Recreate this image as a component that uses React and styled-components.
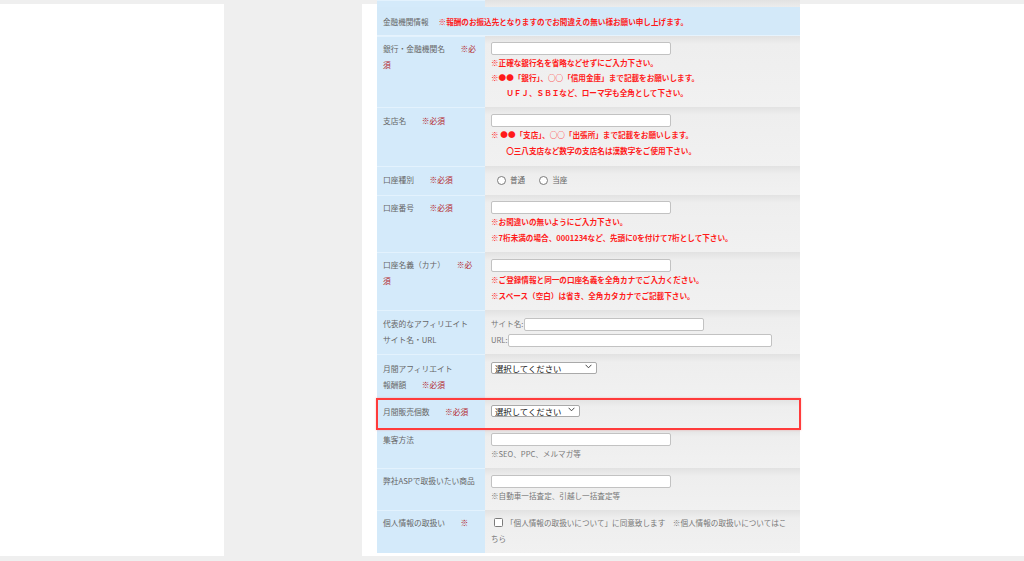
import React from 'react';
import styled, { createGlobalStyle } from 'styled-components';

const GlobalStyle = createGlobalStyle`
  html, body {
    margin: 0;
    padding: 0;
    background: #efefef;
  }
  body {
    font-family: "Noto Sans CJK JP", "Noto Sans", sans-serif;
    font-size: 7.6px;
    color: #666;
  }
`;

const Page = styled.div`
  display: flex;
  align-items: flex-start;
  padding-top: 4px;
  height: 561px;
  box-sizing: border-box;
  overflow: hidden;
`;

const SidePanel = styled.aside`
  width: 224px;
  height: 552px;
  background: #fff;
  flex: none;
`;

const MainPanel = styled.main`
  margin-left: 138px;
  flex: 1;
  height: 552px;
  background: #fff;
  padding-left: 15px;
  box-sizing: border-box;
`;

const FormTable = styled.div`
  width: 423px;
  margin-top: -4px;
  display: flex;
  flex-flow: column nowrap;
`;

const Row = styled.div`
  display: grid;
  grid-template-columns: 108px 315px;
  position: relative;
  ${({ highlight }) => highlight && `
    z-index: 1;
    outline: 2px solid #ff3b3b;
    outline-offset: -1px;
    box-shadow: 0 0 2px 1px rgba(255, 80, 80, 0.35);
  `}
`;

const LabelCell = styled.div`
  background: #d4eafa;
  box-shadow: inset 0 1px 0 #e3f2fd;
  padding: ${({ pad }) => pad || '6px 6px 6px'};
  line-height: 16px;
  font-size: 7.75px;
  color: #666;
`;

const ValueCell = styled.div`
  background: linear-gradient(to bottom, #e2e2e2 0, #eeeeee 8px, #f1f1f1 100%);
  padding: ${({ pad }) => pad || '6px 6px 6px'};
  line-height: 16px;
  color: #666;
`;

const StubRow = styled(Row)`
  height: 7px;
`;

const SectionRow = styled.div`
  height: 29px;
  background: #d3e9f9;
  border-bottom: 1px solid #e6f3fd;
  box-sizing: border-box;
  display: flex;
  align-items: center;
  padding: 0 6px;
  gap: 10px;
`;

const Required = styled.span`
  color: #b3262b;
`;

const RedNote = styled.div`
  color: #ff1a1a;
  font-weight: 700;
  line-height: ${({ lh }) => lh || 16}px;
  white-space: pre;
`;

const RedHeading = styled.span`
  color: #ff1a1a;
  font-weight: 700;
`;

const GrayNote = styled.div`
  color: #777;
  line-height: 16px;
`;

const TextInput = styled.input`
  display: block;
  width: ${({ w }) => w || 180}px;
  height: 13px;
  margin: 0;
  padding: 0 3px;
  box-sizing: border-box;
  border: 1px solid #c2c2c2;
  border-radius: 2px;
  background: #fff;
  font-size: 8px;
`;

const InlineField = styled.label`
  display: flex;
  align-items: center;
  height: 16px;
  color: #777;
`;

const InlineInput = styled(TextInput)`
  display: inline-block;
`;

const SelectWrap = styled.div`
  position: relative;
  width: ${({ w }) => w}px;
  height: 12px;
`;

const NativeSelect = styled.select`
  appearance: none;
  -webkit-appearance: none;
  width: 100%;
  height: 12px;
  margin: 0;
  padding: 0 0 0 3px;
  box-sizing: border-box;
  border: 1px solid #a9a9a9;
  border-radius: 2px;
  background: #fff;
  color: #111;
  font-family: "Noto Sans CJK JP", sans-serif;
  font-size: 8.4px;
  line-height: 10px;
`;

const Chevron = styled.svg`
  position: absolute;
  right: 5px;
  top: 3px;
  width: 7px;
  height: 5px;
  pointer-events: none;
`;

const ChoiceLine = styled.div`
  display: flex;
  align-items: center;
  height: 16px;
  color: #666;
`;

const Radio = styled.span`
  width: 7px;
  height: 7px;
  border: 1px solid #7b7b7b;
  border-radius: 50%;
  background: #fff;
  margin: 0 4px 0 ${({ ml }) => ml || 0}px;
  flex: none;
`;

const Checkbox = styled.span`
  width: 7px;
  height: 7px;
  border: 1px solid #7b7b7b;
  border-radius: 1.5px;
  background: #fff;
  margin: 0 3px 0 3px;
  flex: none;
  display: inline-block;
  vertical-align: -1px;
`;

const AgreeText = styled.div`
  line-height: 16px;
  color: #777;
  padding-right: 2px;
`;

function Select({ w }) {
  return (
    <SelectWrap w={w}>
      <NativeSelect defaultValue="">
        <option value="">選択してください</option>
      </NativeSelect>
      <Chevron viewBox="0 0 7 5">
        <path d="M0.6 0.8 L3.5 3.8 L6.4 0.8" fill="none" stroke="#333" strokeWidth="0.9" />
      </Chevron>
    </SelectWrap>
  );
}

export default function App() {
  return (
    <>
      <GlobalStyle />
      <Page>
        <SidePanel />
        <MainPanel>
          <FormTable>
            <StubRow>
              <LabelCell pad="0" />
              <ValueCell pad="0" />
            </StubRow>

            <SectionRow>
              <span>金融機関情報</span>
              <RedHeading>※報酬のお振込先となりますのでお間違えの無い様お願い申し上げます。</RedHeading>
            </SectionRow>

            <Row>
              <LabelCell pad="5px 6px">
                銀行・金融機関名　　<Required>※必須</Required>
              </LabelCell>
              <ValueCell pad="6px 6px 7px">
                <TextInput />
                <RedNote lh={15}>※正確な銀行名を省略などせずにご入力下さい。</RedNote>
                <RedNote lh={15}>※●●「銀行」、○○「信用金庫」まで記載をお願いします。</RedNote>
                <RedNote lh={15}>　　ＵＦＪ、ＳＢＩなど、ローマ字も全角として下さい。</RedNote>
              </ValueCell>
            </Row>

            <Row>
              <LabelCell pad="6px 6px">
                支店名　　<Required>※必須</Required>
              </LabelCell>
              <ValueCell pad="7px 6px 7px">
                <TextInput />
                <RedNote>※ ●●「支店」、○○「出張所」まで記載をお願いします。</RedNote>
                <RedNote>　　〇三八支店など数字の支店名は漢数字をご使用下さい。</RedNote>
              </ValueCell>
            </Row>

            <Row>
              <LabelCell pad="6px 6px 7px">
                口座種別　　<Required>※必須</Required>
              </LabelCell>
              <ValueCell pad="6px 6px 7px">
                <ChoiceLine>
                  <Radio ml={6} />普通
                  <Radio ml={14} />当座
                </ChoiceLine>
              </ValueCell>
            </Row>

            <Row>
              <LabelCell pad="5px 6px">
                口座番号　　<Required>※必須</Required>
              </LabelCell>
              <ValueCell pad="6px 6px 6px">
                <TextInput />
                <RedNote>※お間違いの無いようにご入力下さい。</RedNote>
                <RedNote>※7桁未満の場合、0001234など、先頭に0を付けて7桁として下さい。</RedNote>
              </ValueCell>
            </Row>

            <Row>
              <LabelCell pad="5px 6px">
                口座名義（カナ）　　<Required>※必須</Required>
              </LabelCell>
              <ValueCell pad="7px 6px 6px">
                <TextInput />
                <RedNote>※ご登録情報と同一の口座名義を全角カナでご入力ください。</RedNote>
                <RedNote>※スペース（空白）は省き、全角カタカナでご記載下さい。</RedNote>
              </ValueCell>
            </Row>

            <Row>
              <LabelCell pad="6px 6px">
                代表的なアフィリエイト<br />サイト名・URL
              </LabelCell>
              <ValueCell pad="6px 6px 6px">
                <InlineField>
                  サイト名:<InlineInput w={180} />
                </InlineField>
                <InlineField>
                  URL:<InlineInput w={264} />
                </InlineField>
              </ValueCell>
            </Row>

            <Row>
              <LabelCell pad="7px 6px 6px">
                月間アフィリエイト<br />報酬額　　<Required>※必須</Required>
              </LabelCell>
              <ValueCell pad="7px 6px">
                <Select w={106} />
              </ValueCell>
            </Row>

            <Row highlight>
              <LabelCell pad="5px 6px 9px">
                月間販売個数　　<Required>※必須</Required>
              </LabelCell>
              <ValueCell pad="5px 6px">
                <Select w={89} />
              </ValueCell>
            </Row>

            <Row>
              <LabelCell pad="3px 6px 6px">
                集客方法
              </LabelCell>
              <ValueCell pad="4px 6px 6px">
                <TextInput />
                <GrayNote>※SEO、PPC、メルマガ等</GrayNote>
              </ValueCell>
            </Row>

            <Row>
              <LabelCell pad="5px 6px">
                弊社ASPで取扱いたい商品
              </LabelCell>
              <ValueCell pad="7px 6px 6px">
                <TextInput />
                <GrayNote>※自動車一括査定、引越し一括査定等</GrayNote>
              </ValueCell>
            </Row>

            <Row>
              <LabelCell pad="5px 6px 6px">
                個人情報の取扱い　　<Required>※</Required>
              </LabelCell>
              <ValueCell pad="5px 6px 6px">
                <AgreeText>
                  <Checkbox />「個人情報の取扱いについて」に同意致します　※個人情報の取扱いについてはこちら
                </AgreeText>
              </ValueCell>
            </Row>
          </FormTable>
        </MainPanel>
      </Page>
    </>
  );
}
